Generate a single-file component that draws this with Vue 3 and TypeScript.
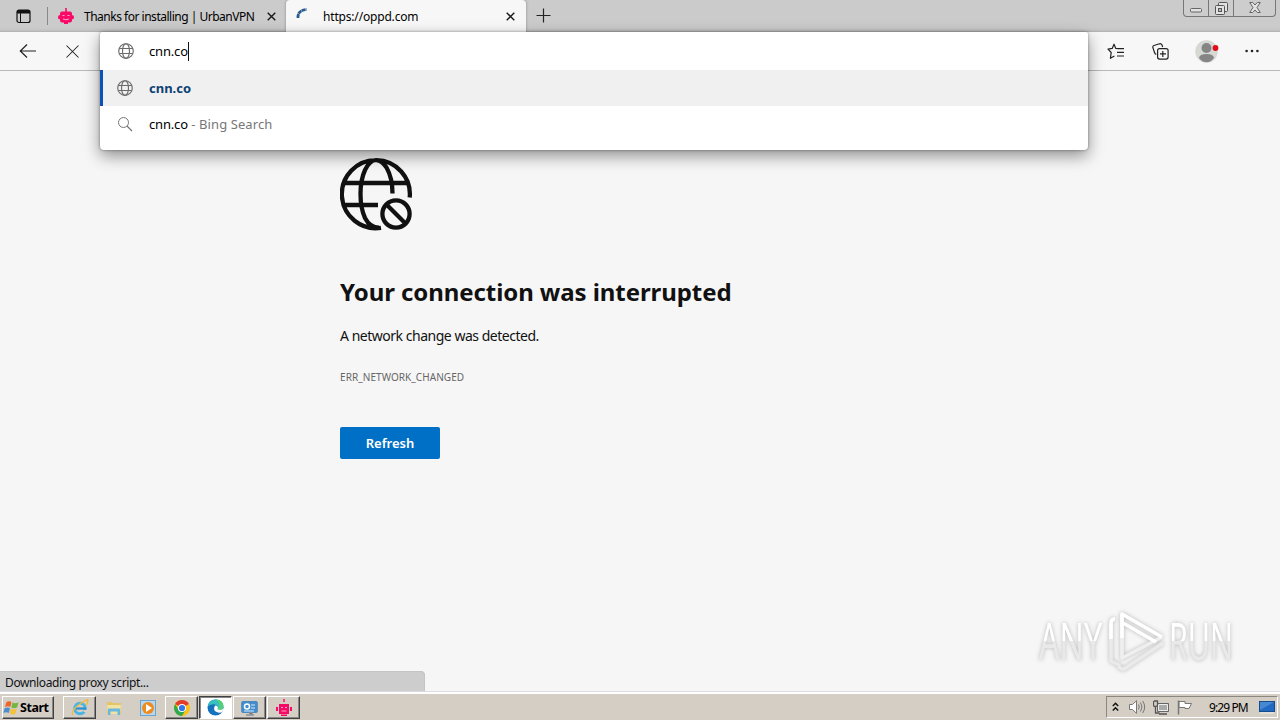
<script setup lang="ts">
interface Tab { title: string; active: boolean; kind: 'robot' | 'loading' }
interface Suggestion { kind: 'globe' | 'search'; text: string; note: string; selected: boolean }

const tabs: Tab[] = [
  { title: 'Thanks for installing | UrbanVPN', active: false, kind: 'robot' },
  { title: 'https://oppd.com', active: true, kind: 'loading' },
]
const suggestions: Suggestion[] = [
  { kind: 'globe', text: 'cnn.co', note: '', selected: true },
  { kind: 'search', text: 'cnn.co', note: ' - Bing Search', selected: false },
]
const tasks: { id: string; look: string }[] = [
  { id: 'ie', look: 'raised' },
  { id: 'folder', look: 'flat' },
  { id: 'player', look: 'flat' },
  { id: 'chrome', look: 'raised' },
  { id: 'edge', look: 'pressed' },
  { id: 'panel', look: 'raised' },
  { id: 'robot', look: 'raised' },
]
</script>

<template>
  <div class="screen">
    <svg class="defs" width="0" height="0">
      <symbol id="globe" viewBox="0 0 16 16">
        <g fill="none" stroke="#6c6c6c" stroke-width="1.150">
          <circle cx="8" cy="8" r="7.300" />
          <ellipse cx="8" cy="8" rx="3.500" ry="7.300" />
          <path d="M1.400 5.500h13.200M1.400 10.500h13.200" />
        </g>
      </symbol>
      <symbol id="robot" viewBox="0 0 16 16">
        <path fill="#fa0a68" d="M7.200 0h1.600v3.500H12Q14 3.500 14 5.500v1.700h.8Q16 7.200 16 9.200t-1.200 2.100H14v1.200q0 2-2 2h-2V16H6v-1.500H4q-2 0-2-2v-1.200h-.8Q0 11.300 0 9.200t1.200-2H2V5.500q0-2 2-2h3.200z" />
        <path d="M4.500 7.500h2M9.500 7.500h2M5 11q3 1.500 6 0" fill="none" stroke="#ffa5c8" />
      </symbol>
    </svg>

    <header class="titlebar">
      <div class="tabmenu">
        <svg width="15" height="15" viewBox="0 0 15 15"><rect x="1" y="1" width="13" height="12.500" rx="2" fill="none" stroke="#111" stroke-width="1.200" /><path d="M1 2.500Q1 1 2.500 1h10Q14 1 14 2.500V4.500H1z" fill="#111" /><path d="M4.500 4v9" stroke="#111" stroke-width="1" /></svg>
      </div>
      <div v-for="tab in tabs" :key="tab.title" class="tab" :class="{ active: tab.active }">
        <svg v-if="tab.kind === 'robot'" class="favicon" width="16" height="16"><use href="#robot" /></svg>
        <svg v-else class="favicon" width="16" height="16" viewBox="0 0 16 16"><path d="M2 10Q1.500 2.200 10.500 1.500" fill="none" stroke="#285a8c" stroke-width="2.800" stroke-dasharray="4 .400" /></svg>
        <span class="tabtitle">{{ tab.title }}</span>
        <svg class="close" width="9" height="9" viewBox="0 0 9 9"><path d="M.7.7l7.600 7.600M8.300.7L.7 8.300" stroke="#181818" stroke-width="1.400" /></svg>
      </div>
      <svg class="plus" width="15" height="15" viewBox="0 0 15 15"><path d="M7.500.5v14M.5 7.500h14" stroke="#222" stroke-width="1.200" /></svg>
      <div class="winbtns">
        <span class="wb w1"><svg width="12" height="5"><rect x=".5" y=".5" width="11" height="3.500" rx="1" fill="#e2e2e2" stroke="#666" /></svg></span>
        <span class="wb w2"><svg width="13" height="13" viewBox="0 0 13 13"><g fill="#e2e2e2" stroke="#555"><rect x="3.500" y=".5" width="9" height="9" rx="1" /><rect x=".5" y="3.500" width="9" height="9" rx="1" /><rect x="3.500" y="6.500" width="3" height="3" fill="#bbb" /></g></svg></span>
        <span class="wb w3"><svg width="12" height="11" viewBox="0 0 12 11"><path d="M.7.5h3L6 3 8.300.5h3L8 5.500l3.300 5h-3L6 8l-2.300 2.500h-3L4 5.500z" fill="#e2e2e2" stroke="#666" /></svg></span>
      </div>
    </header>

    <nav class="toolbar">
      <svg class="back" width="18" height="16" viewBox="0 0 18 16"><path d="M17 8H1.500M8 1.500L1.300 8 8 14.500" fill="none" stroke="#222" stroke-width="1.200" /></svg>
      <svg class="stop" width="13" height="13" viewBox="0 0 13 13"><path d="M.5.5l12 12M12.500.5l-12 12" stroke="#222" stroke-width="1.050" /></svg>
      <div class="tools">
        <svg class="star" width="18" height="17" viewBox="0 0 18 17"><path d="M11.500 5.700L8.800 5.400 7 1.200 5.200 5.400 1 6.200l3.200 3.300-.8 5.800 4-2.300M11 5.700h6M10 9.300h7M10 13h7" fill="none" stroke="#222" stroke-width="1.200" stroke-linejoin="round" /></svg>
        <svg class="collect" width="17" height="17" viewBox="0 0 17 17"><g fill="none" stroke="#222" stroke-width="1.200"><rect x="5.600" y="5.600" width="10.500" height="10.500" rx="2" /><path d="M4.300 11.500Q3 11 2.500 9.500L.9 4.600Q.5 3 2 2.500L7.500.8Q9.200.4 10 2l.7 2M10.800 8v6M8 10.900h6" /></g></svg>
        <svg class="avatar" width="24" height="24" viewBox="0 0 24 24"><circle cx="11.500" cy="12.500" r="11.200" fill="#d6d8d4" /><circle cx="11.500" cy="9" r="5" fill="#858585" /><path d="M4 19Q4.500 15 11.500 15T19 19Q16 23.200 11.500 23.200T4 19" fill="#858585" /><circle cx="20.500" cy="9" r="2.900" fill="#e00b1c" /></svg>
        <svg class="dots" width="14" height="4" viewBox="0 0 14 4"><g fill="#222"><circle cx="1.600" cy="2" r="1.300" /><circle cx="7" cy="2" r="1.300" /><circle cx="12.400" cy="2" r="1.300" /></g></svg>
      </div>
    </nav>

    <main class="page">
      <svg class="errimg" width="73" height="73" viewBox="0 0 73 73">
        <g fill="none" stroke="#111" stroke-width="4.300">
          <path d="M41 69.800A34 34 0 1 1 69.700 39.500M4 25h64M4 47h34M52.500 35.500Q52.500 20 46.500 9.500 41 2 36 2.200 30 2 25 12 20.500 22 20.500 36T25 60Q30 69.700 39 69.700" />
          <circle cx="56" cy="56" r="13.600" /><path d="M46.500 46.500l19 19" />
        </g>
      </svg>
      <h1>Your connection was interrupted</h1>
      <p class="detail">A network change was detected.</p>
      <p class="code">ERR_NETWORK_CHANGED</p>
      <button class="refresh">Refresh</button>
    </main>

    <div class="status">Downloading proxy script...</div>

    <footer class="taskbar">
      <div class="start">
        <svg width="17" height="16" viewBox="0 0 17 16"><path d="M3.500 2Q6 .5 8.500 2L7.300 7Q5 5.500 2 7z" fill="#ed6527" /><path d="M9.500 2.500Q12 4 15.500 2.500L14 7.500Q11 9 8.300 7.400z" fill="#73b640" /><path d="M1.700 8.200Q4.500 6.700 7 8.200L5.800 13Q3 11.500.3 13z" fill="#4d8dce" /><path d="M8 8.600q3 1.500 5.700.2L12.300 14Q9.500 15 6.800 13.500z" fill="#f4c238" /></svg>
        <b>Start</b>
      </div>
      <div v-for="t in tasks" :key="t.id" class="task" :class="[t.look, t.id]">
        <svg v-if="t.id === 'ie'" width="18" height="18" viewBox="0 0 18 18"><circle cx="9" cy="9.500" r="5.300" fill="none" stroke="#4bb4e4" stroke-width="3" /><path d="M5 9.500h10" stroke="#2b8fcb" stroke-width="2.200" /><path d="M12.500 11h4v2h-4z" fill="#d5d0c8" /><path d="M2 16Q-1 12 9 5t7.500-2.500Q17 4 15 6" fill="none" stroke="#eebb3c" stroke-width="1.300" /></svg>
        <svg v-else-if="t.id === 'folder'" width="16" height="16" viewBox="0 0 16 16"><path d="M1 2h5l1 1h8v11H1z" fill="#e3c468" /><path d="M1 5h14l-1 9H2z" fill="#f3e3a0" /><path d="M2 9.500Q2 8.500 3 8.500h10q1 0 1 1V15h-2.500v-3.500h-7V15H2z" fill="#69b8df" /></svg>
        <svg v-else-if="t.id === 'player'" width="16" height="16" viewBox="0 0 16 16"><rect x=".5" y=".5" width="15" height="15" fill="#b9d7ec" stroke="#68a5d1" /><circle cx="8" cy="8" r="6" fill="#f18a1c" /><path d="M6 4l6 4-6 4z" fill="#fff" /></svg>
        <svg v-else-if="t.id === 'chrome'" width="16" height="16" viewBox="0 0 16 16"><circle cx="8" cy="8" r="8" fill="#fbc116" /><path d="M8 8L1.100 4A8 8 0 0 1 14.900 4z" fill="#e33b2e" /><path d="M1.100 4A8 8 0 0 0 8 16l3.500-6H4.500z" fill="#2da94f" /><circle cx="8" cy="8" r="4" fill="#fff" /><circle cx="8" cy="8" r="3.100" fill="#3477e8" /></svg>
        <svg v-else-if="t.id === 'edge'" width="17" height="17" viewBox="0 0 17 17"><circle cx="8.500" cy="8.500" r="8" fill="#1371bd" /><path d="M.6 7.500Q2 .5 8.500.5c6 0 9 5 7.500 8.500-1 2.500-5 2.500-5.500 1Q11.500 9 10 6.500 6 3.500.6 7.500" fill="#35bfc0" /><path d="M9 .5c6 0 8.500 5 7 8.500-1 2.500-5 2.500-5.500 1Q15 6 9 .5" fill="#55cf78" /><path d="M8 6.500Q5 12 11 13.500q2.500.5 4.500-.7l1-3q-3 2-6 .5Q11.500 9 10.500 7.500 9 6 8 6.500" fill="#fff" /></svg>
        <svg v-else-if="t.id === 'panel'" width="17" height="16" viewBox="0 0 17 16"><rect x=".7" y="1.500" width="15.600" height="11" rx="1" fill="#438dcc" stroke="#4b88bb" /><circle cx="6" cy="6.500" r="2.500" fill="none" stroke="#fff" stroke-width="1.500" /><path d="M10 5h4M10 8h4M3 11h10" stroke="#d4edff" /><path d="M5 15h8M8 13h3v2" stroke="#8b9094" stroke-width="1.500" /></svg>
        <svg v-else width="16" height="17" viewBox="0 0 16 17"><path d="M7.300 0h1.400v3H7.300zM3 5h10v10H3zM0 8h2v4H0zM14 8h2v4h-2zM5 15.500h6V17H5z" fill="#f50a65" /><path d="M5 8.500h2M9 8.500h2M5.500 12h5" stroke="#ff9fc4" /></svg>
      </div>
      <div class="tray">
        <svg class="chev" width="7" height="10" viewBox="0 0 7 10"><path d="M.8 4L3.500 1.300 6.200 4M.8 8.500l2.700-2.700 2.700 2.700" fill="none" stroke="#111" stroke-width="1.500" /></svg>
        <svg class="sound" width="17" height="14" viewBox="0 0 17 14"><path d="M.5 4.500h3L7.500.7v12.600l-4-3.800h-3z" fill="#fff" stroke="#777" /><path d="M9.500 4.500q1.500 2.500 0 5M11.500 2.500q3 4.500 0 9M13.700 1q4 6 0 12" fill="none" stroke="#777" /></svg>
        <svg class="net" width="16" height="15" viewBox="0 0 16 15"><path d="M4.500 3.500h11v8h-11z" fill="#aaa" stroke="#666" /><path d="M5.500 4.500h9v6h-9z" fill="none" stroke="#eee" /><path d="M.5 1v4q0 1.500 2 1.500t2-1.500V1M1 1h4M2.500 6.500V13h4M6 14h8" fill="none" stroke="#555" stroke-width="1.300" /></svg>
        <svg class="flag" width="16" height="15" viewBox="0 0 16 15"><path d="M2 1.500h6v2h6.500L12 8.500H8v-1H2z" fill="#fff" stroke="#777" /><path d="M1.500.5v14" stroke="#777" stroke-width="1.500" /></svg>
        <span class="clock">9:29 PM</span>
        <svg class="desk" width="16" height="13" viewBox="0 0 16 13"><rect x=".5" y=".5" width="15" height="10" fill="#2169c3" stroke="#174c8b" /><path d="M1 1h14L1 9z" fill="#4688d2" /><path d="M1 12h14" stroke="#eee" /></svg>
      </div>
    </footer>

    <section class="omnibox">
      <div class="entry"><svg width="16" height="16"><use href="#globe" /></svg><span class="typed">cnn.co</span><i class="caret"></i></div>
      <div v-for="s in suggestions" :key="s.kind" class="suggestion" :class="{ selected: s.selected }">
        <svg v-if="s.kind === 'globe'" width="16" height="16"><use href="#globe" /></svg>
        <svg v-else width="16" height="16" viewBox="0 0 16 16"><circle cx="6.500" cy="6.500" r="5" fill="none" stroke="#777" /><path d="M10 10l5 5" stroke="#777" stroke-width="1.200" /></svg>
        <span class="sugtext">{{ s.text }}</span><span class="note">{{ s.note }}</span>
      </div>
    </section>

    <svg class="watermark" width="240" height="100" viewBox="0 0 240 100">
      <defs><linearGradient id="wm" x1="0" y1="0" x2="0" y2="1"><stop offset=".52" stop-color="#fff" /><stop offset=".52" stop-color="#e9e9e9" /></linearGradient></defs>
      <g class="wmtext" fill="url(#wm)">
        <text x="4" y="68" textLength="63" lengthAdjust="spacingAndGlyphs">ANY</text>
        <text x="134" y="68" textLength="64" lengthAdjust="spacingAndGlyphs">RUN</text>
      </g>
      <g fill="none" stroke-width="3.600" stroke-linejoin="round"><path d="M80 27q-4 0-4 4v38l8 4v2q4 4 8 0l36-24" stroke="#eaeaea" /><path d="M87 22v44l40-21" stroke="#efefef" /><path d="M80 27q-4 0-4 4v16M87 46V22l40 23M88 31l33 19" stroke="#fff" /></g>
    </svg>
  </div>
</template>

<style>
html, body { margin: 0; overflow: hidden; }
</style>

<style scoped>
.screen { position: relative; width: 1280px; height: 720px; overflow: hidden; display: flex; flex-direction: column; background: #f6f6f6; font: 12px "Noto Sans", sans-serif; color: #111; }
.screen * { box-sizing: border-box; }
svg { display: block; flex: none; }
.defs { position: absolute; }
.titlebar { height: 32px; display: flex; background: linear-gradient(#cbcbcb 28px, #c0c0c0 31px, #aaa); flex: none; }
.tabmenu { width: 48px; height: 18px; margin-top: 7px; padding: 2px 0 0 16px; border-right: 1px solid #888; }
.tab { width: 238px; display: flex; align-items: center; padding-left: 10px; }
.tab.active { width: 240px; background: #f7f7f7; border-radius: 4px 4px 0 0; box-shadow: 0 0 3px #888; }
.tabtitle { width: 182px; margin-left: 10px; white-space: nowrap; letter-spacing: -.49px; color: #000; }
.tab.active .tabtitle { width: 182px; margin-left: 11px; letter-spacing: -.18px; }
.close { margin-left: 1px; margin-top: 1px; }
.plus { margin: 8px 0 0 10px; }
.winbtns { height: 17px; display: flex; margin: 0 4px 0 auto; border: 1px solid #777; border-top: 0; border-radius: 0 0 4px 4px; background: #cdcdcd; }
.wb { display: flex; justify-content: center; align-items: flex-end; }
.w1 { width: 25px; padding-bottom: 3px; border-right: 1px solid #777; }
.w2 { width: 25px; padding-bottom: 1px; border-right: 1px solid #777; }
.w3 { width: 41px; padding-bottom: 3px; }
.toolbar { height: 39px; display: flex; align-items: center; background: #f7f7f7; border-bottom: 1px solid #b8b8b8; flex: none; }
.back { margin-left: 19px; }
.stop { margin-left: 29px; }
.tools { display: flex; align-items: center; margin: 0 21px 0 auto; }
.collect { margin-left: 27px; }
.avatar { margin-left: 26px; }
.dots { margin-left: 26px; }
.page { flex: 1; padding: 87px 0 0 340px; display: flex; flex-direction: column; align-items: flex-start; }
h1 { margin: 45px 0 0; font-size: 24px; line-height: 32px; font-weight: 700; letter-spacing: -.08px; white-space: nowrap; }
.detail { margin: 18px 0 0; font-size: 14px; line-height: 20px; letter-spacing: -.48px; }
.code { margin: 23px 0 0; font-size: 10px; line-height: 16px; color: #666; letter-spacing: .07px; }
.refresh { width: 100px; height: 32px; margin-top: 42px; padding: 0; border: 0; border-radius: 2px; background: #0070c6; color: #fff; font: 600 13px "Noto Sans", sans-serif; }
.status { width: 425px; height: 21px; padding-left: 5px; background: #cdcdcd; border: 1px solid #c4c4c4; border-width: 1px 1px 0 0; border-radius: 0 4px 0 0; line-height: 21px; letter-spacing: -.38px; flex: none; }
.taskbar { height: 28px; padding: 2px 2px 0; display: flex; background: #d5cec5; border-top: 2px solid #fff; box-shadow: 0 -1px #ddd; flex: none; align-items: flex-start; }
.start { width: 52px; height: 23px; display: flex; align-items: center; border: 1px solid; border-color: #fff #404040 #404040 #fff; box-shadow: inset -1px -1px #888; padding-left: 0; color: #000; font-size: 12.5px; letter-spacing: -.45px; }
.task { width: 33px; height: 23px; margin-left: 1px; display: flex; align-items: center; justify-content: center; border: 1px solid transparent; }
.task.ie { margin-left: 9px; }
.raised { border-color: #fff #404040 #404040 #fff; box-shadow: inset -1px -1px #888; }
.pressed { border-color: #404040 #fff #fff #404040; background: #fff; box-shadow: inset 1px 1px #888; }
.tray { width: 172px; height: 22px; margin-left: auto; display: flex; align-items: center; border: 1px solid; border-color: #8c877f #fff #fff #8c877f; padding-left: 5px; }
.sound { margin-left: 10px; }
.net { margin-left: 7px; }
.flag { margin-left: 8px; }
.clock { width: 43px; margin-left: 16px; white-space: nowrap; letter-spacing: -.9px; color: #000; }
.desk { margin-left: 7px; }
.omnibox { position: absolute; left: 100px; top: 32px; width: 988px; height: 118px; background: #fff; border-radius: 2px 2px 4px 4px; box-shadow: 0 6px 16px rgba(0,0,0,.42), 0 0 3px rgba(0,0,0,.4); font-size: 13px; color: #000; }
.entry { height: 38px; display: flex; align-items: center; padding-left: 18px; }
.typed { margin-left: 15px; letter-spacing: -.17px; }
.caret { width: 1px; height: 19px; background: #111; }
.suggestion { height: 36px; display: flex; align-items: center; padding-left: 17px; white-space: pre; }
.sugtext { margin-left: 16px; letter-spacing: -.17px; }
.note { color: #777; letter-spacing: .08px; }
.selected { background: #f0f0f0; border-left: 3px solid #0b52b8; padding-left: 14px; }
.selected .sugtext { font-weight: 700; color: #0c4174; letter-spacing: 0; }
.watermark { position: absolute; left: 1035px; top: 592px; filter: drop-shadow(0 0 2px rgba(0,0,0,.26)); }
.wmtext { font: 400 52px/1.4 "Open Sans", sans-serif; }
</style>
